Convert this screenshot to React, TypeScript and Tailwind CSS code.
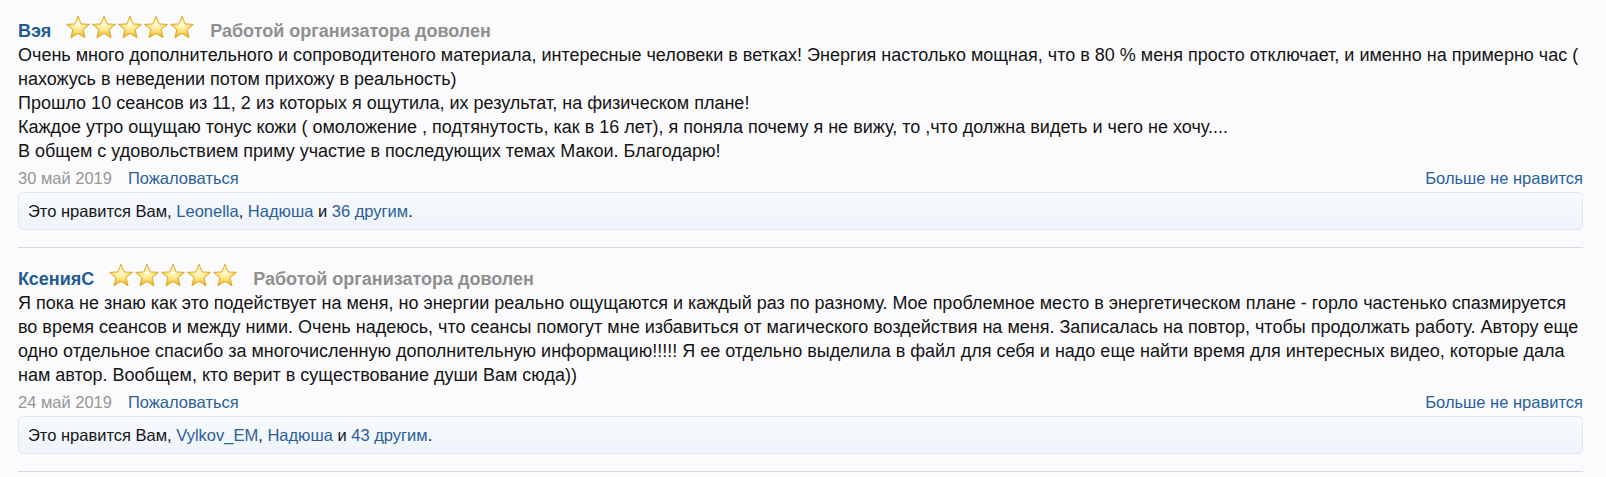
import React from 'react';

type Review = {
  name: string;
  paragraphs: string[];
  date: string;
  likers: string[];
  others: number;
};

const reviews: Review[] = [
  {
    name: 'Вэя',
    paragraphs: [
      'Очень много дополнительного и сопроводитеного материала, интересные человеки в ветках! Энергия настолько мощная, что в 80 % меня просто отключает, и именно на примерно час ( нахожусь в неведении потом прихожу в реальность)',
      'Прошло 10 сеансов из 11, 2 из которых я ощутила, их результат, на физическом плане!',
      'Каждое утро ощущаю тонус кожи ( омоложение , подтянутость, как в 16 лет), я поняла почему я не вижу, то ,что должна видеть и чего не хочу....',
      'В общем с удовольствием приму участие в последующих темах Макои. Благодарю!',
    ],
    date: '30 май 2019',
    likers: ['Leonella', 'Надюша'],
    others: 36,
  },
  {
    name: 'КсенияС',
    paragraphs: [
      'Я пока не знаю как это подействует на меня, но энергии реально ощущаются и каждый раз по разному. Мое проблемное место в энергетическом плане - горло частенько спазмируется во время сеансов и между ними. Очень надеюсь, что сеансы помогут мне избавиться от магического воздействия на меня. Записалась на повтор, чтобы продолжать работу. Автору еще одно отдельное спасибо за многочисленную дополнительную информацию!!!!! Я ее отдельно выделила в файл для себя и надо еще найти время для интересных видео, которые дала нам автор. Вообщем, кто верит в существование души Вам сюда))',
    ],
    date: '24 май 2019',
    likers: ['Vylkov_EM', 'Надюша'],
    others: 43,
  },
];

const Star: React.FC<{ id: string }> = ({ id }) => (
  <svg width="26" height="25" viewBox="0 0 26 25" className="block">
    <defs>
      <radialGradient id={id} cx="50%" cy="38%" r="60%">
        <stop offset="0%" stopColor="#fffbe0" />
        <stop offset="45%" stopColor="#ffe98a" />
        <stop offset="100%" stopColor="#f2b526" />
      </radialGradient>
    </defs>
    <path
      d="M13 1.2 L16.2 8.9 L24.4 9.4 L18.1 14.7 L20.1 22.8 L13 18.4 L5.9 22.8 L7.9 14.7 L1.6 9.4 L9.8 8.9 Z"
      fill={`url(#${id})`}
      stroke="#d9a21c"
      strokeWidth="0.9"
      strokeLinejoin="round"
    />
  </svg>
);

const Stars: React.FC<{ prefix: string }> = ({ prefix }) => (
  <div className="flex items-center">
    {[0, 1, 2, 3, 4].map((i) => (
      <Star key={i} id={`${prefix}-star-${i}`} />
    ))}
  </div>
);

const ReviewItem: React.FC<{ review: Review; idx: number }> = ({ review, idx }) => (
  <li className="pt-[19px] pb-[17px] border-b border-[#d2d9e3]">
    <div className="flex items-center h-6">
      <span className="font-bold text-[18px] text-[#1d5b94]">{review.name}</span>
      <div className="ml-[14px] mr-[15px] -mt-[8px]">
        <Stars prefix={`r${idx}`} />
      </div>
      <span className="font-bold text-[18px] text-[#8f8f8f]">Работой организатора доволен</span>
    </div>
    <div className="text-[18px] leading-6 text-[#141414]">
      {review.paragraphs.map((p, i) => (
        <div key={i}>{p}</div>
      ))}
    </div>
    <div className="flex justify-between items-center h-6 mt-[3px] text-[16.5px]">
      <div className="flex gap-[16px]">
        <span className="text-[#969696]">{review.date}</span>
        <a className="text-[#2a609a]">Пожаловаться</a>
      </div>
      <a className="text-[#2a609a]">Больше не нравится</a>
    </div>
    <div className="mt-[2px] h-[38px] flex items-center px-[9px] rounded-[5px] border border-[#dae8f5] bg-gradient-to-b from-[#f7fafd] to-[#eef4fb] text-[16.5px] text-[#141414]">
      Это нравится Вам,&nbsp;
      <a className="text-[#2a609a]">{review.likers[0]}</a>,&nbsp;
      <a className="text-[#2a609a]">{review.likers[1]}</a>&nbsp;и&nbsp;
      <a className="text-[#2a609a]">{review.others} другим</a>.
    </div>
  </li>
);

export default function App() {
  return (
    <div className="min-h-screen bg-[#fbfbfd] pl-[18px] pr-[23px] font-['Liberation_Sans',Arial,sans-serif]">
      <ol>
        {reviews.map((r, i) => (
          <ReviewItem key={i} review={r} idx={i} />
        ))}
      </ol>
    </div>
  );
}
